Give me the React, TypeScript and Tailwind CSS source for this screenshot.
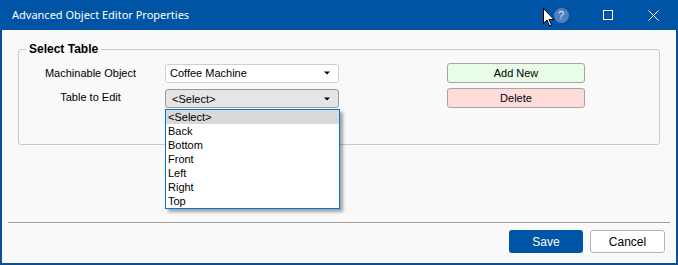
const tables = ["<Select>", "Back", "Bottom", "Front", "Left", "Right", "Top"];

function Arrow() {
  return (
    <svg width="6" height="4" viewBox="0 0 6 4" className="shrink-0">
      <path d="M0 0.5h6L3 3.5z" fill="#000" />
    </svg>
  );
}

function Combo({ value, gray }: { value: string; gray?: boolean }) {
  return (
    <div
      className={
        "flex h-[19px] w-[174px] items-center justify-between rounded-[3px] border pl-[4px] pr-[8px] " +
        (gray ? "border-[#9a9a9a] bg-[#e5e5e5]" : "border-[#cfcfcf] bg-white")
      }
    >
      <span className={gray ? "pl-[2px]" : ""}>{value}</span>
      <Arrow />
    </div>
  );
}

function App() {
  return (
    <div
      className="relative flex h-[265px] w-[678px] flex-col overflow-hidden bg-[#0b4f98] text-[11px] text-black"
      style={{ fontFamily: '"Liberation Sans", Arial, sans-serif' }}
    >
      {/* Title bar */}
      <div className="flex h-[30px] shrink-0 items-center bg-[#0054a6] text-white">
        <span
          className="pl-[12px] text-[11px]"
          style={{ fontFamily: '"Noto Sans", sans-serif' }}
        >
          Advanced Object Editor Properties
        </span>
        <div className="ml-auto flex items-center pr-[1px]">
          <div className="flex h-[30px] w-[34px] items-center justify-center pl-[4px]">
            <div className="flex h-[15px] w-[15px] items-center justify-center rounded-full bg-[#4f81bf] text-[11px] leading-none text-[#dfe8f3]">
              ?
            </div>
          </div>
          <div className="ml-[9px] flex h-[30px] w-[46px] items-center justify-center">
            <svg width="10" height="10" viewBox="0 0 10 10">
              <rect x="0.5" y="0.5" width="9" height="9" fill="none" stroke="#fff" />
            </svg>
          </div>
          <div className="flex h-[30px] w-[46px] items-center justify-center pr-[2px]">
            <svg width="11" height="11" viewBox="0 0 11 11">
              <path d="M0.5 0.5l10 10M10.5 0.5l-10 10" stroke="#fff" strokeWidth="1" />
            </svg>
          </div>
        </div>
      </div>

      {/* Body */}
      <div className="mx-[2px] mb-[2px] flex flex-1 flex-col bg-[#f9f9f9]">
        <div className="px-[16px] pt-[12px]">
          <fieldset className="h-[103px] rounded-[3px] border border-[#c9c9c9] px-0">
            <legend className="ml-[7px] px-[3px] text-[12px] font-bold leading-[15px]">
              Select Table
            </legend>
            <div className="flex flex-col gap-[6px] pt-[6px]">
              <div className="flex items-center">
                <div className="w-[140px] pl-[3px] text-center">Machinable Object</div>
                <div className="ml-[6px]">
                  <Combo value="Coffee Machine" />
                </div>
                <button className="ml-[108px] h-[20px] w-[138px] rounded-[3px] border border-[#a6a6a6] bg-[#e8fce8]">
                  Add New
                </button>
              </div>
              <div className="flex items-center">
                <div className="w-[140px] pl-[3px] pb-[3px] text-center">Table to Edit</div>
                <div className="relative ml-[6px]">
                  <Combo value="<Select>" gray />
                  <div className="absolute left-0 top-[20px] z-10 w-[175px] border border-[#0078d7] bg-white shadow-[3px_3px_3px_rgba(0,0,0,0.35)]">
                    {tables.map((t, i) => (
                      <div
                        key={t}
                        className={"h-[14px] pl-[2px] leading-[14px] " + (i === 0 ? "bg-[#d9d9d9]" : "")}
                      >
                        {t}
                      </div>
                    ))}
                  </div>
                </div>
                <button className="ml-[108px] -mt-[1px] h-[20px] w-[138px] rounded-[3px] border border-[#a6a6a6] bg-[#ffdcdc]">
                  Delete
                </button>
              </div>
            </div>
          </fieldset>
        </div>

        <div className="mx-[6px] mt-auto mb-[10px] flex flex-col">
          <div className="h-[2px] border-t border-[#a0a0a0] bg-[#f9f9f9]" />
          <div className="flex justify-end gap-[7px] pr-[5px] pt-[6px]">
            <button className="h-[23px] w-[74px] rounded-[3px] bg-[#0054a6] text-[12px] text-white">
              Save
            </button>
            <button className="h-[23px] w-[75px] rounded-[3px] border border-[#b5b5b5] bg-white text-[12px]">
              Cancel
            </button>
          </div>
        </div>
      </div>

      {/* Mouse pointer over the title bar */}
      <svg
        className="absolute left-[543px] top-[8px]"
        width="12"
        height="19"
        viewBox="0 0 12 19"
      >
        <path
          d="M0.5 0.5v15l3.5-3.5 2.5 6 2-1-2.5-5.5h5z"
          fill="#fff"
          stroke="#000"
          strokeWidth="1"
          strokeLinejoin="round"
        />
      </svg>
    </div>
  );
}

export default App;
